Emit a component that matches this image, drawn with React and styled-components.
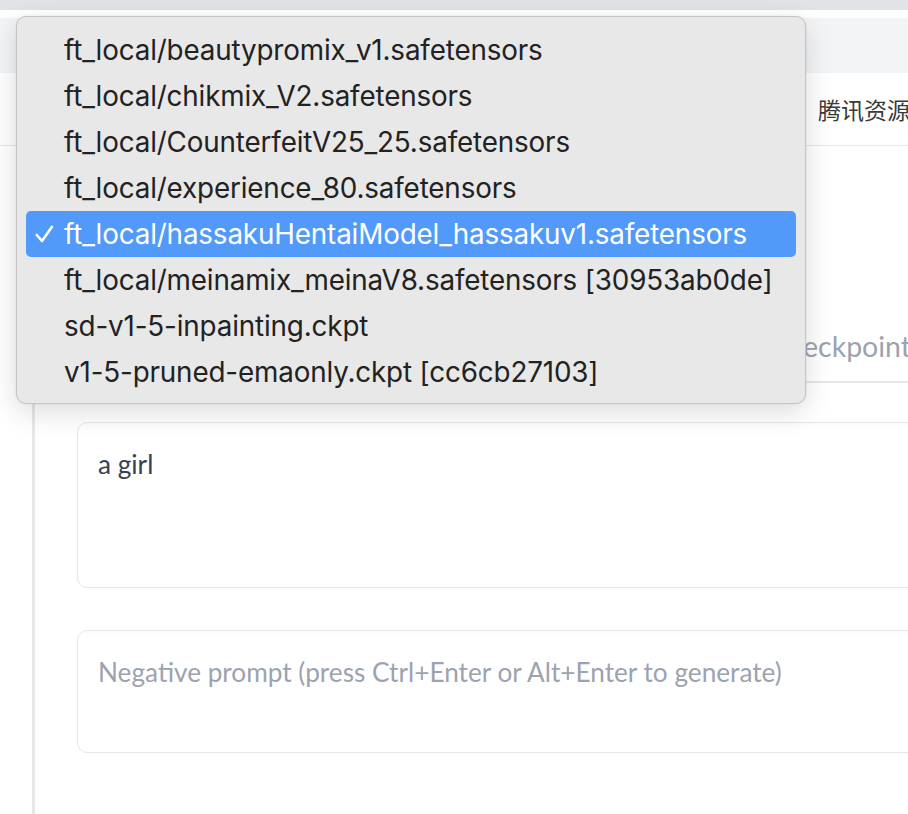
import React from 'react';
import styled, { createGlobalStyle } from 'styled-components';

const GlobalStyle = createGlobalStyle`
  html, body {
    margin: 0;
    padding: 0;
    background: #ffffff;
    overflow: hidden;
  }
  body {
    font-family: Lato, "Noto Sans", sans-serif;
  }
`;

const options = [
  'ft_local/beautypromix_v1.safetensors',
  'ft_local/chikmix_V2.safetensors',
  'ft_local/CounterfeitV25_25.safetensors',
  'ft_local/experience_80.safetensors',
  'ft_local/hassakuHentaiModel_hassakuv1.safetensors',
  'ft_local/meinamix_meinaV8.safetensors [30953ab0de]',
  'sd-v1-5-inpainting.ckpt',
  'v1-5-pruned-emaonly.ckpt [cc6cb27103]',
];

const Page = styled.div`
  position: relative;
  width: 908px;
  height: 814px;
  overflow: hidden;
  background: #ffffff;
`;

const TopBand = styled.div`
  height: 10px;
  background: #e2e3e6;
  border-bottom: 8px solid #ffffff;
`;

const Toolbar = styled.div`
  height: 55px;
  background: #f3f4f6;
`;

const TabRow = styled.div`
  height: 72px;
  display: flex;
  align-items: center;
  padding-left: 818px;
  border-bottom: 1.5px solid #e5e7eb;
  font-family: "Noto Sans CJK SC", sans-serif;
  font-size: 23px;
  color: #3a3a3a;
  white-space: nowrap;
`;

const Body = styled.div`
  display: flex;
  height: 668px;
  padding-left: 32px;
`;

const Rail = styled.div`
  width: 3px;
  background: #e5e7eb;
  flex: none;
`;

const Column = styled.div`
  flex: 1;
  display: flex;
  flex-direction: column;
  padding-left: 42px;
`;

const CheckpointField = styled.div`
  height: 237px;
  display: flex;
  align-items: flex-end;
  margin-left: -42px;
  border-bottom: 2px solid #e5e7eb;
  font-size: 28.5px;
  color: #9ca3af;
  white-space: nowrap;
  padding-bottom: 18px;
  box-sizing: border-box;
`;

const Lead = styled.span`
  flex: none;
  width: 768px;
  text-align: right;
  overflow: hidden;
  direction: rtl;
`;

const Tail = styled.span`
  flex: none;
`;

const Prompt = styled.div`
  margin-top: ${(p) => p.$top}px;
  height: ${(p) => p.$height}px;
  margin-right: -20px;
  border: 1.5px solid #e5e7eb;
  border-radius: 10px;
  box-shadow: inset 0 2px 4px rgba(0, 0, 0, 0.02);
  padding: 25px 20px 0 20px;
  box-sizing: border-box;
  font-size: 26.2px;
  color: ${(p) => (p.$placeholder ? '#9ca3af' : '#374151')};
  white-space: nowrap;
`;

const Menu = styled.ul`
  position: absolute;
  left: 16px;
  top: 16px;
  width: 790px;
  height: 388px;
  box-sizing: border-box;
  margin: 0;
  padding: 10px 9px 4px;
  list-style: none;
  background: #e8e8e8;
  border: 1px solid #c4c4c4;
  border-radius: 10px;
  box-shadow: 0 8px 28px rgba(0, 0, 0, 0.14), 0 0 2px rgba(0, 0, 0, 0.1);
  font-family: Inter, "Noto Sans", sans-serif;
`;

const Item = styled.li`
  height: 46px;
  display: flex;
  align-items: center;
  padding-left: 10px;
  border-radius: 5px;
  font-size: 27.8px;
  letter-spacing: -0.15px;
  color: ${(p) => (p.$selected ? '#ffffff' : '#222222')};
  background: ${(p) => (p.$selected ? '#529afa' : 'transparent')};
  white-space: nowrap;
`;

const Check = styled.span`
  width: 28px;
  flex: none;
  display: flex;
  align-items: center;
  margin-left: -1px;
  margin-right: 1px;
`;

const Tick = () => (
  <svg width="19" height="18" viewBox="0 0 19 18">
    <path d="M1.8 10 L7 16 L17 1.8" fill="none" stroke="#ffffff" strokeWidth="2.6" strokeLinecap="round" strokeLinejoin="round" />
  </svg>
);

export default function App() {
  const selected = 4;
  return (
    <Page>
      <GlobalStyle />
      <TopBand />
      <Toolbar />
      <TabRow>腾讯资源</TabRow>
      <Body>
        <Rail />
        <Column>
          <CheckpointField>
            <Lead>Stable Diffusion ch</Lead>
            <Tail>eckpoint</Tail>
          </CheckpointField>
          <Prompt $top={39} $height={166}>a girl</Prompt>
          <Prompt $top={42} $height={123} $placeholder>
            Negative prompt (press Ctrl+Enter or Alt+Enter to generate)
          </Prompt>
        </Column>
      </Body>
      <Menu>
        {options.map((o, i) => (
          <Item key={o} $selected={i === selected}>
            <Check>{i === selected && <Tick />}</Check>
            {o}
          </Item>
        ))}
      </Menu>
    </Page>
  );
}
